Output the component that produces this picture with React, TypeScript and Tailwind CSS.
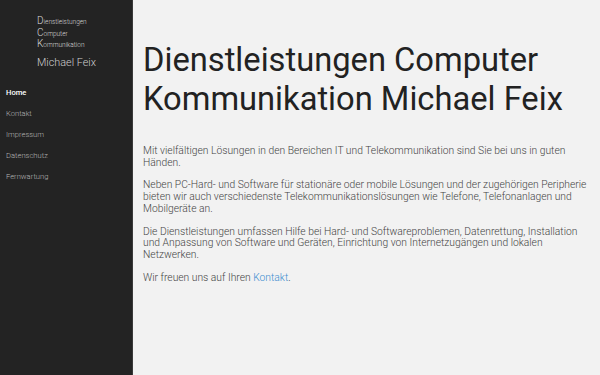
export default function App() {
  const nav = ["Home", "Kontakt", "Impressum", "Datenschutz", "Fernwartung"];
  return (
    <div className="flex h-[375px] w-[600px] overflow-hidden bg-[#f2f2f2]" style={{ fontFamily: "Roboto, 'Liberation Sans', sans-serif" }}>
      <aside className="w-[133px] shrink-0 bg-[#232323] border-r border-[#3a3a3a]">
        <div className="pl-[37px] pt-[15px] text-[#d8d8d8] font-light">
          <div className="h-[11.5px] leading-[11.5px] text-[6.5px]"><span className="text-[10px] leading-[11.5px]">D</span>ienstleistungen</div>
          <div className="h-[11.5px] leading-[11.5px] text-[6.5px]"><span className="text-[10px] leading-[11.5px]">C</span>omputer</div>
          <div className="h-[11.5px] leading-[11.5px] text-[6.5px]"><span className="text-[10px] leading-[11.5px]">K</span>ommunikation</div>
          <div className="mt-[6px] text-[10.8px] leading-[14px] text-[#cfcfcf]">Michael Feix</div>
        </div>
        <nav className="mt-[12px] flex flex-col">
          {nav.map((n, i) => (
            <a key={n} className={`px-[6px] text-[7.6px] leading-[21px] ${i === 0 ? "text-white font-medium" : "text-[#b5b5b5] font-light"}`}>{n}</a>
          ))}
        </nav>
      </aside>
      <main className="flex-1 pl-[10px] pr-[8px] pt-[41px]">
        <h1 className="text-[32.7px] leading-[38.5px] font-normal text-[#222]">Dienstleistungen Computer Kommunikation Michael Feix</h1>
        <div className="mt-[27px] text-[10.3px] leading-[11.7px] font-light text-[#444] flex flex-col gap-[11px]">
          <p>Mit vielfältigen Lösungen in den Bereichen IT und Telekommunikation sind Sie bei uns in guten Händen.</p>
          <p>Neben PC-Hard- und Software für stationäre oder mobile Lösungen und der zugehörigen Peripherie bieten wir auch verschiedenste Telekommunikationslösungen wie Telefone, Telefonanlagen und Mobilgeräte an.</p>
          <p>Die Dienstleistungen umfassen Hilfe bei Hard- und Softwareproblemen, Datenrettung, Installation und Anpassung von Software und Geräten, Einrichtung von Internetzugängen und lokalen Netzwerken.</p>
          <p>Wir freuen uns auf Ihren <a className="text-[#3b8dd0]">Kontakt</a>.</p>
        </div>
      </main>
    </div>
  );
}
